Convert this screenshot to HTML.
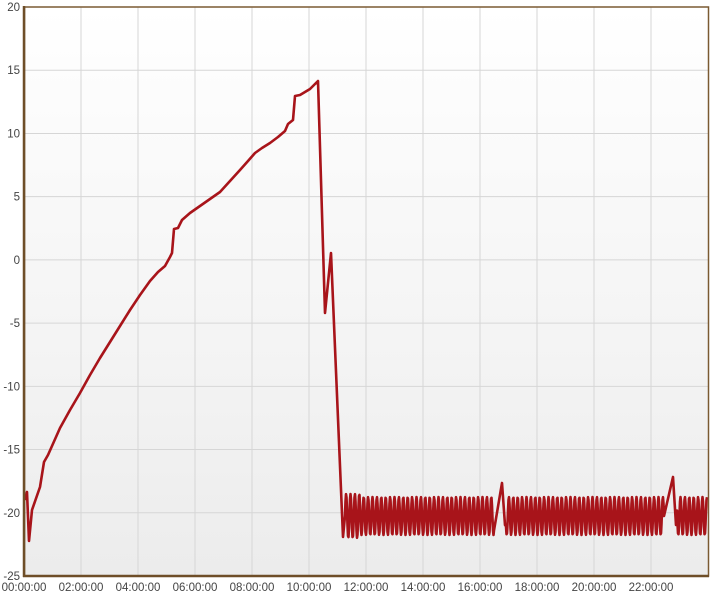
<!DOCTYPE html>
<html><head><meta charset="utf-8"><style>
html,body{margin:0;padding:0;background:#fff;width:720px;height:594px;overflow:hidden}
svg{display:block}
text{font-family:"Liberation Sans",sans-serif;font-size:11.5px;fill:#444}
</style></head><body>
<svg id="s" width="720" height="594" viewBox="0 0 720 594">
<defs><linearGradient id="g" x1="0" y1="0" x2="0" y2="1"><stop offset="0" stop-color="#ffffff"/><stop offset="1" stop-color="#ececec"/></linearGradient></defs>
<rect x="24" y="7" width="685" height="569" fill="url(#g)"/>
<g id="grid" stroke="#d6d6d6" stroke-width="1"></g>
<path id="ln" fill="none" stroke="#a8141a" stroke-width="2.6" stroke-linejoin="round"/>
<rect x="24.5" y="7" width="684" height="569" fill="none" stroke="#7a5a32" stroke-width="1.5"/>
<line x1="24" y1="6" x2="24" y2="577" stroke="#6e4e28" stroke-width="2.5"/>
<line x1="23" y1="576" x2="709" y2="576" stroke="#6e4e28" stroke-width="2.5"/>
<g id="lab"></g>
</svg>
<script>
var ns="http://www.w3.org/2000/svg",g=document.getElementById('grid'),lab=document.getElementById('lab');
function el(p,t,a,txt){var e=document.createElementNS(ns,t);for(var k in a)e.setAttribute(k,a[k]);if(txt!==undefined)e.textContent=txt;p.appendChild(e);}
for(var i=0;i<=9;i++){var y=7+i*569/9;if(i>0&&i<9)el(g,'line',{x1:24,x2:709,y1:y,y2:y});el(lab,'text',{x:20,y:y+4,'text-anchor':'end'},String(20-5*i));}
for(var h=0;h<=22;h+=2){var x=24+h*28.5;if(h>0)el(g,'line',{x1:x,x2:x,y1:7,y2:576});el(lab,'text',{x:x,y:591,'text-anchor':'middle'},(h<10?'0':'')+h+':00:00');}
var p=[[25,500],[27,492],[29,541],[32,510],[40,487],[44,462],[48,455],[60,428],[70,410],[80,393],[90,375],[100,358],[110,342],[120,326],[130,310],[140,295],[150,281],[158,272],[165,266],[170,257],[172,253],[174,229],[178,228],[182,220],[190,213],[200,206],[210,199],[220,192],[230,181],[240,170],[248,161],[255,153],[262,148],[270,143],[278,137],[285,131],[288,124],[293,120],[295,96],[300,95],[305,92],[310,89],[318,81],[325,313],[331,253],[343,537]];
var sp=[[494,502,483,507],[664,673,477,678]];
var x0=345;
function osc(a,b){for(var x=a;x<=b;x+=0.5){var ph=(x-x0)/4.4*2*Math.PI;var amp=x<360?22:19;p.push([x,516-amp*Math.sin(ph)]);}}
osc(345,494);p.push([502,483]);p.push([505,525]);osc(506,664);p.push([673,477]);p.push([676,525]);osc(677,707);
document.getElementById('ln').setAttribute('d','M'+p.map(function(a){return a[0].toFixed(1)+','+a[1].toFixed(1)}).join('L'));
</script>
</body></html>
